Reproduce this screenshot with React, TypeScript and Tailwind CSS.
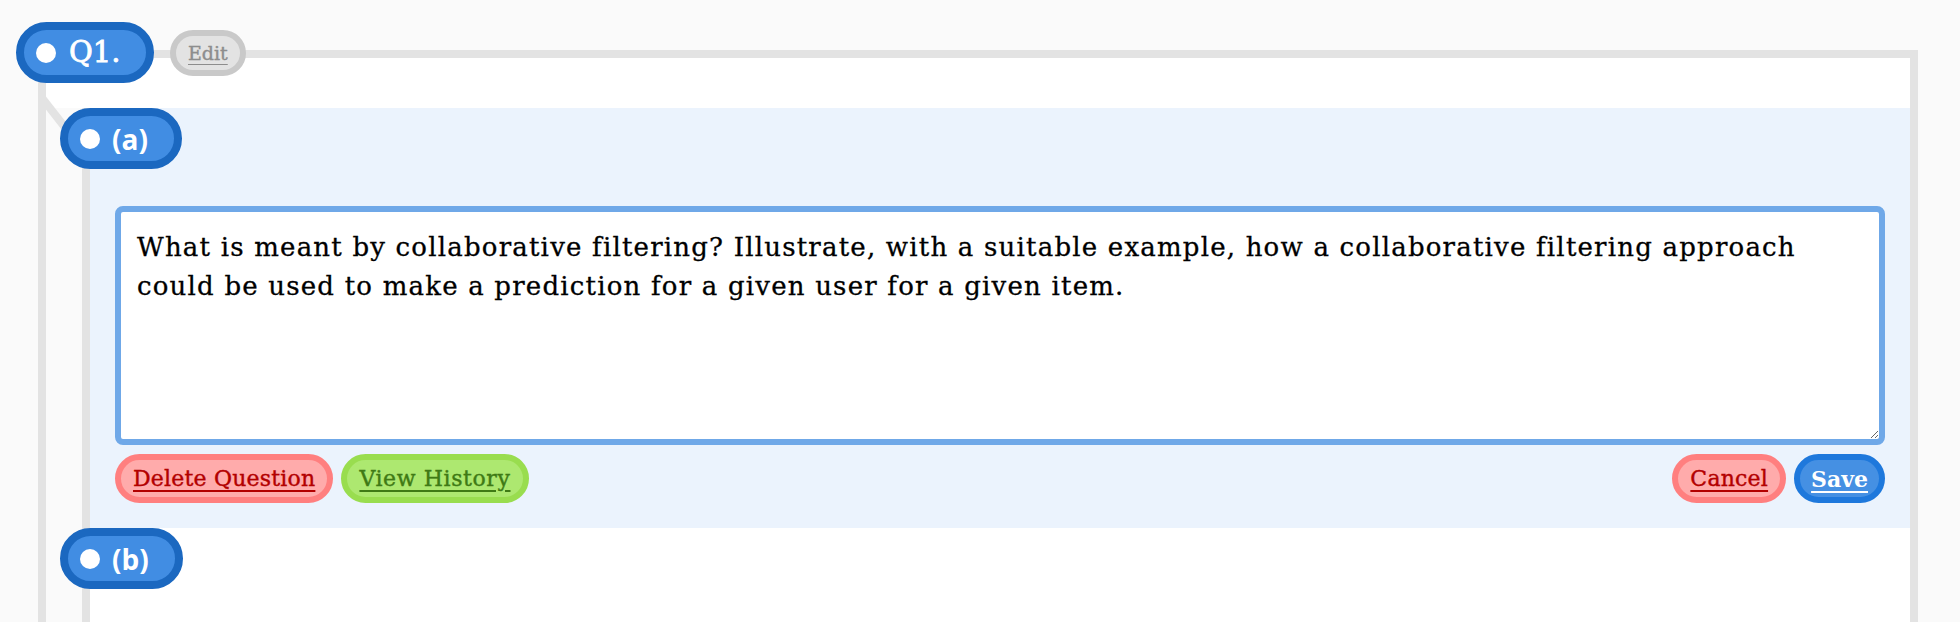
import React from "react";

const serif = { fontFamily: '"DejaVu Serif", serif' };
const sans = { fontFamily: '"Open Sans", "Noto Sans", sans-serif' };

function SubPill({ label }: { label: string }) {
  return (
    <div className="absolute left-[-30px] top-0 z-10 flex h-[61px] items-center rounded-full border-[8px] border-[#1b68c0] bg-[#418de3] pl-[12px] pr-[26px]">
      <span className="h-[20px] w-[20px] rounded-full bg-white" />
      <span className="ml-[12px] text-[28px] font-bold leading-none text-white" style={sans}>
        {label}
      </span>
    </div>
  );
}

export default function App() {
  return (
    <div className="min-h-screen w-full overflow-hidden bg-[#fafafa] pl-[38px] pr-[42px] pt-[50px]">
      <div className="relative border-l-[8px] border-r-[8px] border-t-[8px] border-[#e3e3e3]">
        {/* connector */}
        <svg className="absolute left-[-8px] top-0 z-0 overflow-visible" width="60" height="100">
          <line x1="4" y1="40" x2="40" y2="86" stroke="#e3e3e3" strokeWidth="8" />
        </svg>
        {/* Q1 pill */}
        <div className="absolute left-[-30px] top-[-36px] z-10 flex h-[61px] items-center rounded-full border-[8px] border-[#1b68c0] bg-[#418de3] pl-[12px] pr-[26px]">
          <span className="h-[20px] w-[20px] rounded-full bg-white" />
          <span className="ml-[13px] text-[29px] font-medium leading-none text-white [-webkit-text-stroke:0.8px_white]" style={serif}>
            Q1.
          </span>
        </div>
        {/* Edit pill */}
        <div className="absolute left-[124px] top-[-28px] z-10 flex h-[46px] items-center rounded-full border-[6px] border-[#c9c9c9] bg-[#e3e3e3] px-[12px]">
          <span className="text-[19px] leading-none text-[#8d8d8d] underline underline-offset-[4px] [-webkit-text-stroke:0.4px_#8d8d8d]" style={serif}>
            Edit
          </span>
        </div>

        <div className="h-[50px] bg-white" />

        <div className="flex">
          <div className="w-[36px] shrink-0" />
          <div className="relative z-[5] flex-1 border-l-[8px] border-[#e3e3e3]">
            {/* (a) */}
            <div className="relative bg-[#ebf3fd] px-[25px] pb-[25px] pt-[98px]">
              <SubPill label="(a)" />
              <textarea
                className="block h-[239px] w-full rounded-[8px] border-[6px] border-[#6fa8e8] bg-white px-[16px] pb-[16px] pt-[16px] text-[26px] leading-[38.5px] tracking-[1.2px] text-black outline-none [-webkit-text-stroke:0.3px_black]"
                style={serif}
                defaultValue="What is meant by collaborative filtering? Illustrate, with a suitable example, how a collaborative filtering approach could be used to make a prediction for a given user for a given item."
              />
              <div className="mt-[9px] flex items-center justify-between">
                <div className="flex gap-[8px]">
                  <button className="flex h-[49px] items-center rounded-full border-[6px] border-[#ff7f7f] bg-[#ffabab] px-[12px] text-[22px] leading-none tracking-[0.2px] text-[#b30000] underline underline-offset-[4px] [-webkit-text-stroke:0.4px_#b30000]" style={serif}>
                    Delete Question
                  </button>
                  <button className="flex h-[49px] items-center rounded-full border-[6px] border-[#99dd4f] bg-[#ade870] px-[12px] text-[22px] leading-none tracking-[0.6px] text-[#3f7a15] underline underline-offset-[4px] [-webkit-text-stroke:0.4px_#3f7a15]" style={serif}>
                    View History
                  </button>
                </div>
                <div className="flex gap-[8px]">
                  <button className="flex h-[49px] items-center rounded-full border-[6px] border-[#ff7f7f] bg-[#ffabab] px-[12px] text-[22px] leading-none tracking-[0.2px] text-[#b30000] underline underline-offset-[4px] [-webkit-text-stroke:0.4px_#b30000]" style={serif}>
                    Cancel
                  </button>
                  <button className="flex h-[49px] items-center rounded-full border-[6px] border-[#1e78dc] bg-[#4590e3] px-[11px] text-[22px] font-bold leading-none text-white underline underline-offset-[4px]" style={serif}>
                    Save
                  </button>
                </div>
              </div>
            </div>
            {/* (b) */}
            <div className="relative h-[200px] bg-white">
              <SubPill label="(b)" />
            </div>
          </div>
        </div>
      </div>
    </div>
  );
}
